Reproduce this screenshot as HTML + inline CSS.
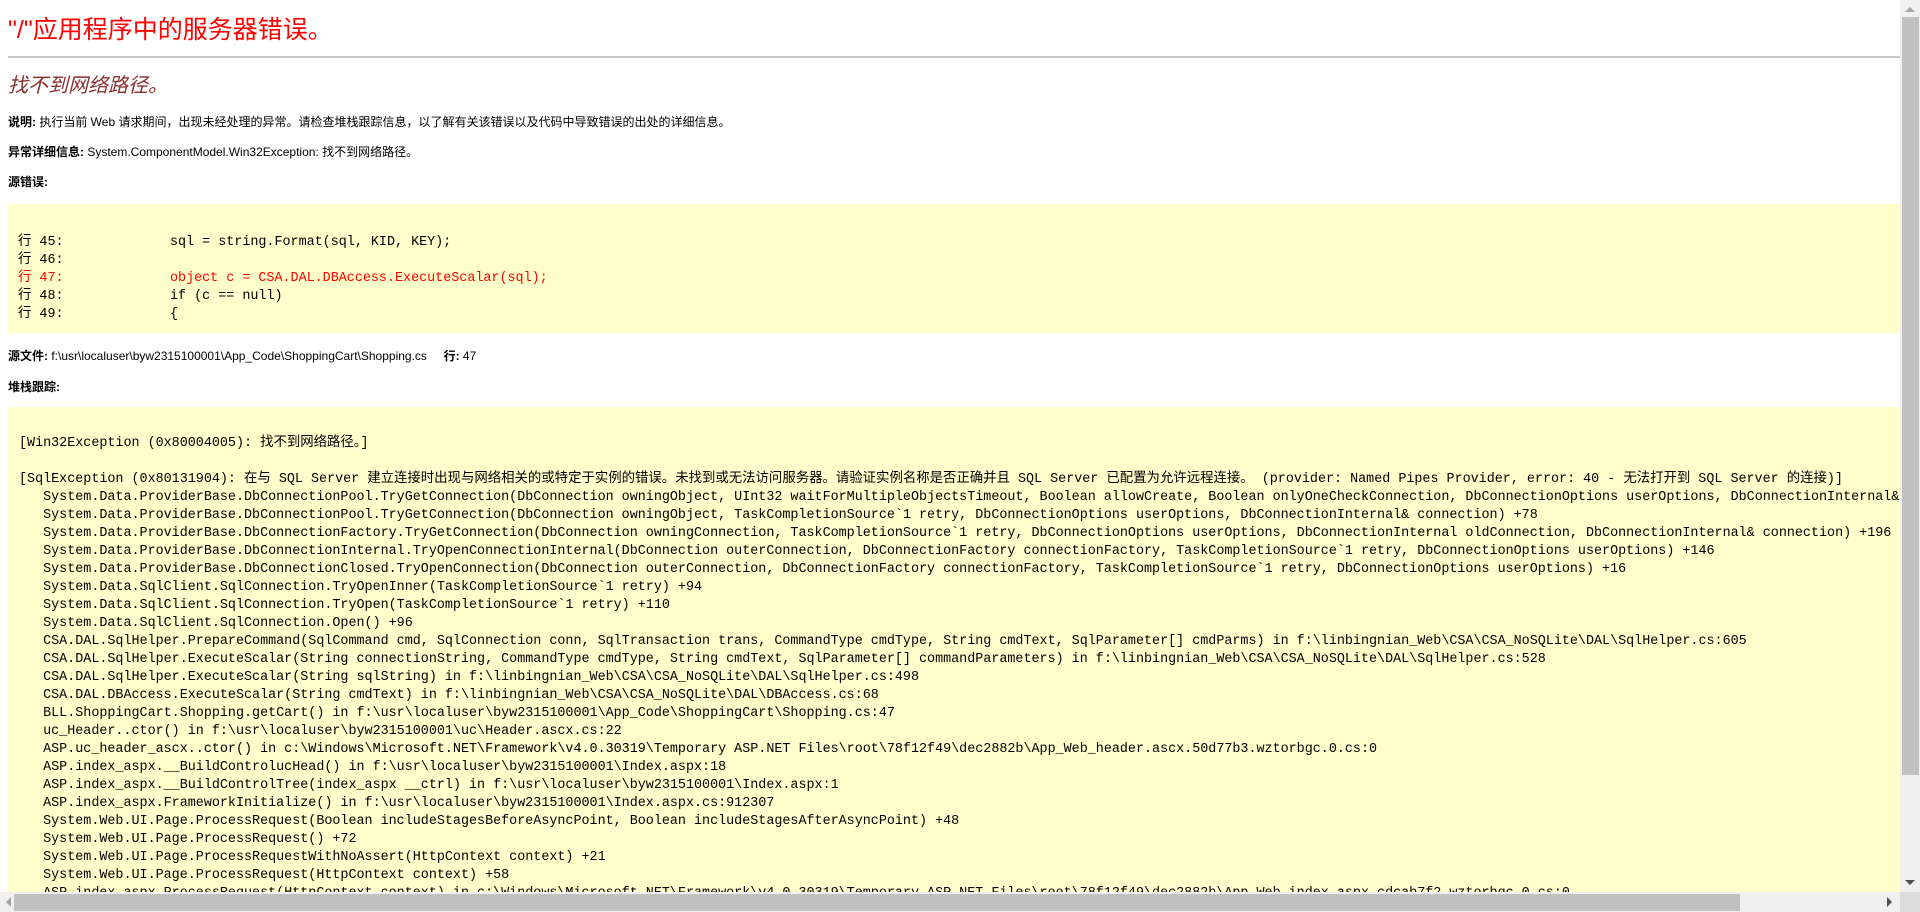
<!DOCTYPE html>
<html><head><meta charset="utf-8"><style>
html,body{margin:0;padding:0;width:1920px;height:912px;overflow:hidden;background:#fff;}
body{position:relative;font-family:"Liberation Sans","Noto Sans CJK SC",sans-serif;color:#000;}
.a{position:absolute;white-space:nowrap;}
.t{left:8px;top:14px;font-size:25px;line-height:32px;color:#f00;}
.hr{left:8px;top:56px;width:1892px;height:2px;background:#c8c8c8;}
.h2{left:8px;top:74px;font-size:20px;line-height:24px;font-style:italic;color:#8a3030;}
.p{left:8px;font-size:12px;line-height:18px;}
.p b{font-weight:bold;}
.box{left:8px;width:1892px;background:#ffffcc;}
.mono{font-family:"Liberation Mono","Noto Sans CJK SC",monospace;font-size:13.4px;line-height:18px;}
.cl{height:18px;white-space:pre;}
.cl span{display:inline-block;width:152px;padding-left:10px;}
.red{color:#f00;}
.st{white-space:pre;padding-left:11px;}
.vs{left:1900px;top:0;width:20px;height:892px;background:#f0f0f0;}
.vt{left:1902px;top:17px;width:17px;height:758px;background:#c1c1c1;}
.hs{left:0;top:892px;width:1900px;height:20px;background:#f0f0f0;}
.ht{left:14px;top:894px;width:1726px;height:17px;background:#c1c1c1;}
.cor{left:1900px;top:892px;width:20px;height:20px;background:#dcdcdc;}
</style></head><body>
<div class="a t">"/"应用程序中的服务器错误。</div>
<div class="a hr"></div>
<div class="a h2">找不到网络路径。</div>
<div class="a p" style="top:113px"><b>说明:</b> 执行当前 Web 请求期间，出现未经处理的异常。请检查堆栈跟踪信息，以了解有关该错误以及代码中导致错误的出处的详细信息。</div>
<div class="a p" style="top:143px"><b>异常详细信息:</b> System.ComponentModel.Win32Exception: 找不到网络路径。</div>
<div class="a p" style="top:173px"><b>源错误:</b></div>
<div class="a box mono" style="top:204px;height:99px;padding-top:30px;">
<div class="cl"><span>行 45:</span>sql = string.Format(sql, KID, KEY);</div>
<div class="cl"><span>行 46:</span></div>
<div class="cl red"><span>行 47:</span>object c = CSA.DAL.DBAccess.ExecuteScalar(sql);</div>
<div class="cl"><span>行 48:</span>if (c == null)</div>
<div class="cl"><span>行 49:</span>{</div>
</div>
<div class="a p" style="top:347px"><b>源文件:</b> f:\usr\localuser\byw2315100001\App_Code\ShoppingCart\Shopping.cs &nbsp;&nbsp;&nbsp; <b>行:</b> 47</div>
<div class="a p" style="top:378px"><b>堆栈跟踪:</b></div>
<div class="a box mono" style="top:407px;height:505px;padding-top:28px;overflow:hidden;">
<div class="st">[Win32Exception (0x80004005): 找不到网络路径。]

[SqlException (0x80131904): 在与 SQL Server 建立连接时出现与网络相关的或特定于实例的错误。未找到或无法访问服务器。请验证实例名称是否正确并且 SQL Server 已配置为允许远程连接。 (provider: Named Pipes Provider, error: 40 - 无法打开到 SQL Server 的连接)]
   System.Data.ProviderBase.DbConnectionPool.TryGetConnection(DbConnection owningObject, UInt32 waitForMultipleObjectsTimeout, Boolean allowCreate, Boolean onlyOneCheckConnection, DbConnectionOptions userOptions, DbConnectionInternal&amp; connection) +1000
   System.Data.ProviderBase.DbConnectionPool.TryGetConnection(DbConnection owningObject, TaskCompletionSource`1 retry, DbConnectionOptions userOptions, DbConnectionInternal&amp; connection) +78
   System.Data.ProviderBase.DbConnectionFactory.TryGetConnection(DbConnection owningConnection, TaskCompletionSource`1 retry, DbConnectionOptions userOptions, DbConnectionInternal oldConnection, DbConnectionInternal&amp; connection) +196
   System.Data.ProviderBase.DbConnectionInternal.TryOpenConnectionInternal(DbConnection outerConnection, DbConnectionFactory connectionFactory, TaskCompletionSource`1 retry, DbConnectionOptions userOptions) +146
   System.Data.ProviderBase.DbConnectionClosed.TryOpenConnection(DbConnection outerConnection, DbConnectionFactory connectionFactory, TaskCompletionSource`1 retry, DbConnectionOptions userOptions) +16
   System.Data.SqlClient.SqlConnection.TryOpenInner(TaskCompletionSource`1 retry) +94
   System.Data.SqlClient.SqlConnection.TryOpen(TaskCompletionSource`1 retry) +110
   System.Data.SqlClient.SqlConnection.Open() +96
   CSA.DAL.SqlHelper.PrepareCommand(SqlCommand cmd, SqlConnection conn, SqlTransaction trans, CommandType cmdType, String cmdText, SqlParameter[] cmdParms) in f:\linbingnian_Web\CSA\CSA_NoSQLite\DAL\SqlHelper.cs:605
   CSA.DAL.SqlHelper.ExecuteScalar(String connectionString, CommandType cmdType, String cmdText, SqlParameter[] commandParameters) in f:\linbingnian_Web\CSA\CSA_NoSQLite\DAL\SqlHelper.cs:528
   CSA.DAL.SqlHelper.ExecuteScalar(String sqlString) in f:\linbingnian_Web\CSA\CSA_NoSQLite\DAL\SqlHelper.cs:498
   CSA.DAL.DBAccess.ExecuteScalar(String cmdText) in f:\linbingnian_Web\CSA\CSA_NoSQLite\DAL\DBAccess.cs:68
   BLL.ShoppingCart.Shopping.getCart() in f:\usr\localuser\byw2315100001\App_Code\ShoppingCart\Shopping.cs:47
   uc_Header..ctor() in f:\usr\localuser\byw2315100001\uc\Header.ascx.cs:22
   ASP.uc_header_ascx..ctor() in c:\Windows\Microsoft.NET\Framework\v4.0.30319\Temporary ASP.NET Files\root\78f12f49\dec2882b\App_Web_header.ascx.50d77b3.wztorbgc.0.cs:0
   ASP.index_aspx.__BuildControlucHead() in f:\usr\localuser\byw2315100001\Index.aspx:18
   ASP.index_aspx.__BuildControlTree(index_aspx __ctrl) in f:\usr\localuser\byw2315100001\Index.aspx:1
   ASP.index_aspx.FrameworkInitialize() in f:\usr\localuser\byw2315100001\Index.aspx.cs:912307
   System.Web.UI.Page.ProcessRequest(Boolean includeStagesBeforeAsyncPoint, Boolean includeStagesAfterAsyncPoint) +48
   System.Web.UI.Page.ProcessRequest() +72
   System.Web.UI.Page.ProcessRequestWithNoAssert(HttpContext context) +21
   System.Web.UI.Page.ProcessRequest(HttpContext context) +58
   ASP.index_aspx.ProcessRequest(HttpContext context) in c:\Windows\Microsoft.NET\Framework\v4.0.30319\Temporary ASP.NET Files\root\78f12f49\dec2882b\App_Web_index.aspx.cdcab7f2.wztorbgc.0.cs:0</div>
</div>
<div class="a vs"></div>
<div class="a vt"></div>
<div class="a hs"></div>
<div class="a ht"></div>
<div class="a cor"></div>
<svg class="a" style="left:1904px;top:4px" width="12" height="10"><path d="M1 8 L6 3 L11 8Z" fill="#a3a3a3"/></svg>
<svg class="a" style="left:1904px;top:878px" width="12" height="10"><path d="M1 2 L6 7 L11 2Z" fill="#505050"/></svg>
<svg class="a" style="left:3px;top:896px" width="10" height="12"><path d="M8 1 L3 6 L8 11Z" fill="#a3a3a3"/></svg>
<svg class="a" style="left:1885px;top:896px" width="10" height="12"><path d="M2 1 L7 6 L2 11Z" fill="#505050"/></svg>
</body></html>
